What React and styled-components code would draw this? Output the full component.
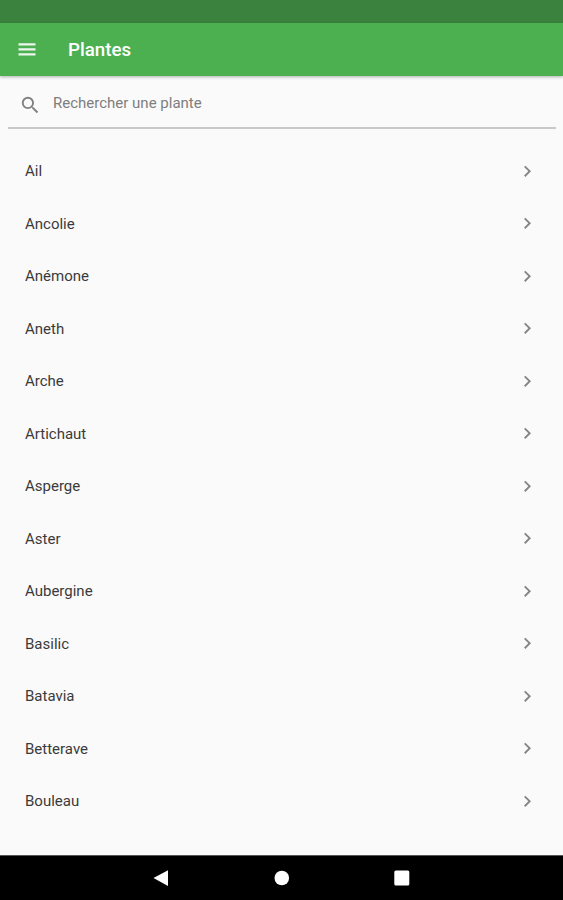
import React from "react";
import styled, { createGlobalStyle } from "styled-components";
import { MdChevronRight, MdSearch } from "react-icons/md";

const GlobalStyle = createGlobalStyle`
  body {
    margin: 0;
    background: #fafafa;
    font-family: Roboto, "Liberation Sans", sans-serif;
  }
`;

const Screen = styled.div`
  display: flex;
  flex-direction: column;
  height: 900px;
  overflow: hidden;
  background: #fafafa;
`;

const StatusBar = styled.div`
  flex: none;
  height: 23px;
  background: #3b823e;
`;

const AppBar = styled.header`
  flex: none;
  display: flex;
  align-items: center;
  height: 52.5px;
  padding-left: 15.5px;
  background: #4caf50;
  color: #fff;
  box-shadow: 0 1px 3px rgba(0, 0, 0, 0.3);
`;

const MenuButton = styled.button`
  display: flex;
  padding: 0;
  border: 0;
  background: none;
  color: inherit;
`;

const MenuIcon = styled.svg`
  width: 23px;
  height: 23px;
  fill: #edf7ed;
`;

const Title = styled.h1`
  margin: 1px 0 0 29.5px;
  font-size: 18.75px;
  font-weight: 500;
  line-height: 22px;
`;

const SearchField = styled.label`
  flex: none;
  display: flex;
  align-items: center;
  height: 45.5px;
  margin: 6px 7.5px 0 8px;
  padding-left: 11px;
  border-bottom: 2px solid #c9c9c9;
  color: #808080;

  svg {
    margin-top: 2px;
  }
`;

const SearchInput = styled.input`
  flex: 1;
  height: 20px;
  margin: 0 0 2px 11.5px;
  padding: 0;
  border: 0;
  outline: 0;
  background: none;
  font: 400 15px/20px Roboto, "Liberation Sans", sans-serif;

  &::placeholder {
    color: #7e7e7e;
    opacity: 1;
  }
`;

const PlantList = styled.ul`
  flex: 1;
  margin: 0;
  padding: 15.5px 25px 0;
  list-style: none;
`;

const PlantRow = styled.li`
  display: flex;
  align-items: center;
  justify-content: space-between;
  height: 52.5px;
  color: #3a3a3a;
  font-size: 15px;
  line-height: 20px;

  svg {
    color: #858585;
  }
`;

const PlantName = styled.span`
  margin-top: 1px;
`;

const NavBar = styled.nav`
  flex: none;
  display: flex;
  align-items: center;
  justify-content: center;
  gap: 98px;
  height: 44px;
  border-top: 1px solid #555;
  background: #000;
`;

const NavIcon = styled.svg`
  width: 22px;
  height: 22px;
  fill: #fff;
`;

const plants = [
  "Ail",
  "Ancolie",
  "Anémone",
  "Aneth",
  "Arche",
  "Artichaut",
  "Asperge",
  "Aster",
  "Aubergine",
  "Basilic",
  "Batavia",
  "Betterave",
  "Bouleau"
];

const App = () => (
  <Screen>
    <GlobalStyle />
    <StatusBar />
    <AppBar>
      <MenuButton aria-label="Menu">
        <MenuIcon viewBox="0 0 23 23">
          <path d="M2.5 5.2h17v2.3h-17zM2.5 10.2h17v2.3h-17zM2.5 15.2h17v2.3h-17z" />
        </MenuIcon>
      </MenuButton>
      <Title>Plantes</Title>
    </AppBar>
    <SearchField>
      <MdSearch size={22.5} />
      <SearchInput placeholder="Rechercher une plante" />
    </SearchField>
    <PlantList>
      {plants.map(plant => (
        <PlantRow key={plant}>
          <PlantName>{plant}</PlantName>
          <MdChevronRight size={22.5} />
        </PlantRow>
      ))}
    </PlantList>
    <NavBar>
      <NavIcon viewBox="0 0 22 22">
        <path d="M2.5 11 17 3.2v15.8z" />
      </NavIcon>
      <NavIcon viewBox="0 0 22 22">
        <circle cx="10.8" cy="11" r="7.3" />
      </NavIcon>
      <NavIcon viewBox="0 0 22 22">
        <rect x="3.3" y="3.4" width="15" height="15" rx="1.5" />
      </NavIcon>
    </NavBar>
  </Screen>
);

export default App;
